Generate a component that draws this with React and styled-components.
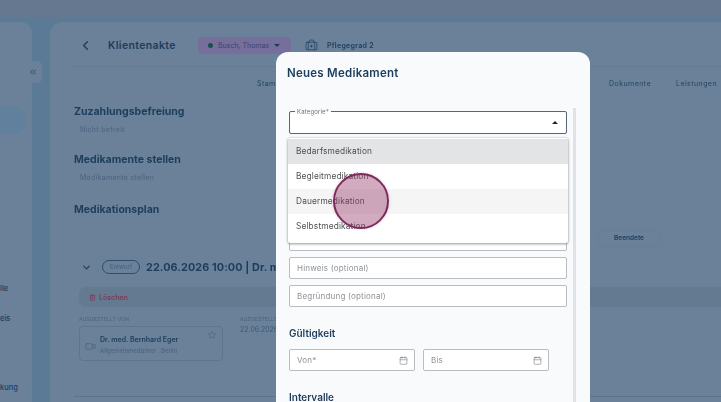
import styled, { createGlobalStyle } from "styled-components";
import {
  BriefcaseMedical,
  Calendar,
  ChevronDown,
  ChevronLeft,
  ChevronsLeft,
  Star,
  Trash2,
  Video,
} from "lucide-react";

const GlobalStyle = createGlobalStyle`
  html, body {
    margin: 0;
    padding: 0;
    background: #5a7a96;
  }
  * {
    box-sizing: border-box;
  }
`;

const categories = [
  { name: "Bedarfsmedikation", tone: "selected" },
  { name: "Begleitmedikation", tone: "plain" },
  { name: "Dauermedikation", tone: "hover" },
  { name: "Selbstmedikation", tone: "plain" },
];

export default function App() {
  return (
    <Screen>
      <GlobalStyle />
      <Backdrop>
        <TopBar />
        <Workspace>
          <Sidebar>
            <SideNavPill />
            <SideLabel $gap={149}>lle</SideLabel>
            <SideLabel $gap={18}>eis</SideLabel>
            <SideLabel $gap={57}>kung</SideLabel>
          </Sidebar>
          <CollapseButton>
            <ChevronsLeft size={10} strokeWidth={2.2} />
          </CollapseButton>
          <MainCard>
            <Header>
              <BackIcon>
                <ChevronLeft size={15} strokeWidth={2.2} />
              </BackIcon>
              <PageTitle>Klientenakte</PageTitle>
              <ClientChip>
                <StatusDot />
                Busch, Thomas
                <ChipCaret />
              </ClientChip>
              <CareLevel>
                <BriefcaseMedical size={13} strokeWidth={1.3} />
                Pflegegrad 2
              </CareLevel>
            </Header>
            <Tabs>
              <Tab>Stammdaten</Tab>
              <Tab $pushed>Dokumente</Tab>
              <Tab>Leistungen</Tab>
            </Tabs>
            <Sections>
              <Section>
                <SectionTitle>Zuzahlungsbefreiung</SectionTitle>
                <SectionHint>Nicht befreit</SectionHint>
              </Section>
              <Section>
                <SectionTitle>Medikamente stellen</SectionTitle>
                <SectionHint>Medikamente stellen</SectionHint>
              </Section>
              <Section $last>
                <SectionTitle>Medikationsplan</SectionTitle>
                <FilterRow>
                  <FilterChip>Beendete</FilterChip>
                </FilterRow>
              </Section>
            </Sections>
            <PlanRow>
              <ChevronDown size={11} strokeWidth={2.6} />
              <DraftBadge>Entwurf</DraftBadge>
              <PlanTitle>22.06.2026 10:00 | Dr. med. Bernhard Eger</PlanTitle>
            </PlanRow>
            <ActionBar>
              <DeleteAction>
                <Trash2 size={7} strokeWidth={2.4} />
                Löschen
              </DeleteAction>
            </ActionBar>
            <Details>
              <DetailColumn $width={161}>
                <DetailLabel>AUSGESTELLT VON</DetailLabel>
                <DoctorCard>
                  <Video size={11} strokeWidth={1.4} />
                  <DoctorText>
                    <DoctorName>Dr. med. Bernhard Eger</DoctorName>
                    <DoctorMeta>Allgemeinmediziner . Berlin</DoctorMeta>
                  </DoctorText>
                  <StarSlot>
                    <Star size={8} strokeWidth={1.4} />
                  </StarSlot>
                </DoctorCard>
              </DetailColumn>
              <DetailColumn>
                <DetailLabel>AUSGESTELLT AM</DetailLabel>
                <DetailValue>22.06.2026</DetailValue>
              </DetailColumn>
            </Details>
            <BottomRule />
          </MainCard>
        </Workspace>
      </Backdrop>

      <Modal>
        <ModalTitle>Neues Medikament</ModalTitle>
        <ModalBody>
          <FormColumn>
            <SelectField>
              <FloatingLabel>Kategorie*</FloatingLabel>
              <SelectCaret />
            </SelectField>
            <Fields>
              <Field />
              <Field />
              <Field />
              <Field />
              <Field>Hinweis (optional)</Field>
              <Field>Begründung (optional)</Field>
            </Fields>
            <GroupTitle>Gültigkeit</GroupTitle>
            <DateRow>
              <DateField>
                Von*
                <Calendar size={9} strokeWidth={1.4} />
              </DateField>
              <DateField>
                Bis
                <Calendar size={9} strokeWidth={1.4} />
              </DateField>
            </DateRow>
            <GroupTitle>Intervalle</GroupTitle>
          </FormColumn>
          <Scrollbar />
        </ModalBody>
        <Dropdown>
          {categories.map((item) => (
            <Option key={item.name} $tone={item.tone}>
              {item.name}
            </Option>
          ))}
        </Dropdown>
      </Modal>

      <ClickMarker />
    </Screen>
  );
}

const Screen = styled.div`
  position: relative;
  width: 721px;
  height: 402px;
  overflow: hidden;
  background: #5a7a96;
  font-family: Inter, "Liberation Sans", sans-serif;
  color: #1d3d5c;
`;

const Backdrop = styled.div`
  height: 100%;
  display: flex;
  flex-direction: column;
  filter: blur(0.55px);
`;

const TopBar = styled.div`
  height: 18px;
  flex: none;
  background: #667790;
`;

const Workspace = styled.div`
  position: relative;
  flex: 1;
  display: flex;
  gap: 18px;
  padding-top: 4px;
`;

const Sidebar = styled.aside`
  width: 32px;
  flex: none;
  display: flex;
  flex-direction: column;
  align-items: flex-start;
  background: #6a8199;
  border-radius: 0 11px 0 0;
`;

const SideNavPill = styled.div`
  width: 26px;
  height: 28px;
  margin-top: 84px;
  background: #60809d;
  border-radius: 0 14px 14px 0;
`;

const SideLabel = styled.span`
  margin-top: ${(p) => p.$gap}px;
  height: 12px;
  line-height: 12px;
  font-size: 7.5px;
  font-weight: 500;
  color: #1f3e5e;
`;

const CollapseButton = styled.div`
  position: absolute;
  left: 24px;
  top: 43px;
  width: 18px;
  height: 22px;
  display: flex;
  align-items: center;
  justify-content: center;
  background: #6a8199;
  border-radius: 0 5px 5px 0;
  color: #2b4a68;
`;

const MainCard = styled.main`
  flex: 1;
  min-width: 0;
  display: flex;
  flex-direction: column;
  background: #6a8199;
  border-radius: 12px 0 0 0;
  overflow: hidden;
`;

const Header = styled.header`
  height: 45px;
  flex: none;
  margin-left: 22px;
  padding-top: 2px;
  display: flex;
  align-items: center;
  border-bottom: 1px solid #647a92;
`;

const BackIcon = styled.span`
  width: 30px;
  margin-left: 6px;
  display: flex;
  color: #1d3d5c;
`;

const PageTitle = styled.h1`
  width: 90px;
  margin: 0;
  font-size: 10.5px;
  font-weight: 600;
  letter-spacing: 0.35px;
`;

const ClientChip = styled.div`
  width: 93px;
  height: 17px;
  padding: 0 7px 0 10px;
  display: flex;
  align-items: center;
  gap: 5px;
  background: #766f9b;
  border-radius: 4px;
  font-size: 7px;
  color: #37466f;
  white-space: nowrap;
`;

const StatusDot = styled.span`
  width: 5px;
  height: 5px;
  flex: none;
  border-radius: 50%;
  background: #17514f;
`;

const ChipCaret = styled.span`
  border-left: 3px solid transparent;
  border-right: 3px solid transparent;
  border-top: 3px solid #1d3d5c;
`;

const CareLevel = styled.div`
  margin-left: 14px;
  display: flex;
  align-items: center;
  gap: 9px;
  font-size: 7px;
  font-weight: 600;
  letter-spacing: 0.3px;
  white-space: nowrap;
`;

const Tabs = styled.nav`
  height: 33px;
  flex: none;
  padding: 0 4px 0 207px;
  display: flex;
  align-items: center;
  gap: 25px;
`;

const Tab = styled.span`
  margin-left: ${(p) => (p.$pushed ? "auto" : "0")};
  font-size: 7px;
  letter-spacing: 0.45px;
  color: #234464;
`;

const Sections = styled.div`
  margin-left: 24px;
  display: flex;
  flex-direction: column;
  gap: 14px;
  padding-top: 4px;
`;

const Section = styled.section`
  position: relative;
  margin-top: ${(p) => (p.$last ? "2px" : "0")};
`;

const SectionTitle = styled.h2`
  margin: 0;
  height: 16px;
  line-height: 16px;
  font-size: 10.5px;
  font-weight: 700;
  color: #1d3d5c;
`;

const SectionHint = styled.p`
  margin: 2px 0 0 6px;
  height: 16px;
  line-height: 16px;
  font-size: 7px;
  letter-spacing: 0.3px;
  color: #4a6280;
`;

const FilterRow = styled.div`
  position: absolute;
  right: 59px;
  top: 28px;
`;

const FilterChip = styled.span`
  display: block;
  width: 66px;
  height: 17px;
  line-height: 15px;
  text-align: center;
  border: 1px solid #667d95;
  border-radius: 9px;
  font-size: 6.5px;
  font-weight: 600;
`;

const PlanRow = styled.div`
  margin: 41px 0 0 31px;
  height: 16px;
  display: flex;
  align-items: center;
  white-space: nowrap;
  color: #1d3d5c;
`;

const DraftBadge = styled.span`
  width: 38px;
  height: 14px;
  margin-left: 10px;
  line-height: 12px;
  text-align: center;
  border: 1px solid #2f4e6e;
  border-radius: 7px;
  font-size: 6px;
  color: #46607c;
`;

const PlanTitle = styled.span`
  margin-left: 6px;
  font-size: 10.8px;
  font-weight: 700;
  letter-spacing: 0.1px;
`;

const ActionBar = styled.div`
  height: 20px;
  flex: none;
  margin: 12px 0 0 29px;
  padding-left: 10px;
  display: flex;
  align-items: center;
  background: #647a91;
  border-radius: 7px 0 0 7px;
`;

const DeleteAction = styled.span`
  display: flex;
  align-items: center;
  gap: 3px;
  font-size: 7px;
  font-weight: 600;
  color: #7c3c5c;
`;

const Details = styled.div`
  margin: 8px 0 0 29px;
  display: flex;
`;

const DetailColumn = styled.div`
  width: ${(p) => (p.$width ? `${p.$width}px` : "auto")};
  flex: none;
`;

const DetailLabel = styled.div`
  height: 9px;
  line-height: 9px;
  font-size: 5px;
  letter-spacing: 0.2px;
  color: #4a6280;
`;

const DetailValue = styled.div`
  margin-top: 1px;
  font-size: 7px;
  color: #3d5a76;
`;

const DoctorCard = styled.div`
  width: 144px;
  height: 35px;
  margin-top: 2px;
  padding: 5px 6px 0 5px;
  display: flex;
  align-items: center;
  gap: 4px;
  border: 1px solid #5d7590;
  border-radius: 4px;
  color: #45607c;
`;

const DoctorText = styled.div`
  flex: 1;
  margin-top: -3px;
`;

const DoctorName = styled.div`
  font-size: 7px;
  font-weight: 600;
  line-height: 11px;
  color: #1d3d5c;
  white-space: nowrap;
`;

const DoctorMeta = styled.div`
  font-size: 6px;
  line-height: 11px;
  color: #4a6280;
  white-space: nowrap;
`;

const StarSlot = styled.span`
  align-self: flex-start;
  display: flex;
  margin-top: -1px;
`;

const BottomRule = styled.div`
  margin: 35px 0 0 24px;
  height: 1px;
  background: #5c738c;
`;

const Modal = styled.section`
  position: absolute;
  left: 276px;
  top: 52px;
  width: 314px;
  height: 360px;
  background: #f8fafc;
  border-radius: 12px 12px 0 0;
  filter: blur(0.25px);
`;

const ModalTitle = styled.h2`
  margin: 0;
  padding: 14px 0 0 11px;
  height: 59px;
  line-height: 15px;
  font-size: 11.5px;
  font-weight: 600;
  letter-spacing: 0.25px;
  color: #1d3d5c;
`;

const ModalBody = styled.div`
  display: flex;
  align-items: flex-start;
  padding-left: 13px;
`;

const FormColumn = styled.div`
  width: 278px;
  flex: none;
`;

const SelectField = styled.div`
  position: relative;
  height: 23px;
  background: #fff;
  border: 1px solid #55657a;
  border-radius: 2px;
`;

const FloatingLabel = styled.span`
  position: absolute;
  left: 5px;
  top: -4px;
  padding: 0 2px;
  height: 8px;
  line-height: 8px;
  background: linear-gradient(#f8fafc 50%, #fff 50%);
  font-size: 6px;
  letter-spacing: 0.15px;
  color: #6b7480;
`;

const SelectCaret = styled.span`
  position: absolute;
  right: 8px;
  top: 9px;
  border-left: 3px solid transparent;
  border-right: 3px solid transparent;
  border-bottom: 3px solid #222;
`;

const Fields = styled.div`
  margin-top: 11px;
  display: flex;
  flex-direction: column;
  gap: 6px;
`;

const Field = styled.div`
  height: 22px;
  padding-left: 7px;
  line-height: 20px;
  background: #fff;
  border: 1px solid #b9bcc0;
  border-radius: 2px;
  font-size: 8px;
  letter-spacing: 0.2px;
  color: #8d9196;
`;

const GroupTitle = styled.h3`
  margin: 19px 0 9px;
  height: 14px;
  line-height: 14px;
  font-size: 10px;
  font-weight: 600;
  color: #1d3d5c;
`;

const DateRow = styled.div`
  display: flex;
  gap: 8px;
  width: 260px;
`;

const DateField = styled(Field)`
  flex: 1;
  display: flex;
  align-items: center;
  justify-content: space-between;
  padding-right: 6px;
  svg {
    color: #656b72;
  }
`;

const Scrollbar = styled.div`
  width: 3px;
  height: 300px;
  margin: -3px 0 0 6px;
  background: #dfe2e6;
`;

const Dropdown = styled.div`
  position: absolute;
  left: 12px;
  top: 86px;
  width: 280px;
  height: 105px;
  padding-top: 1px;
  background: #fff;
  box-shadow: 0 1px 3px rgba(0, 0, 0, 0.38), 0 0 2px rgba(0, 0, 0, 0.18);
  border-radius: 2px;
`;

const optionColors = {
  selected: "#e3e4e5",
  hover: "#f5f5f5",
  plain: "#fff",
};

const Option = styled.div`
  height: 25px;
  padding-left: 8px;
  line-height: 25px;
  background: ${(p) => optionColors[p.$tone]};
  font-size: 8.3px;
  letter-spacing: 0.15px;
  color: #4d4f52;
`;

const ClickMarker = styled.div`
  position: absolute;
  left: 333px;
  top: 173px;
  width: 56px;
  height: 56px;
  border-radius: 50%;
  background: rgba(150, 55, 105, 0.42);
  border: 2px solid #7b2b5c;
  box-shadow: 0 0 3px rgba(190, 90, 140, 0.4);
`;
